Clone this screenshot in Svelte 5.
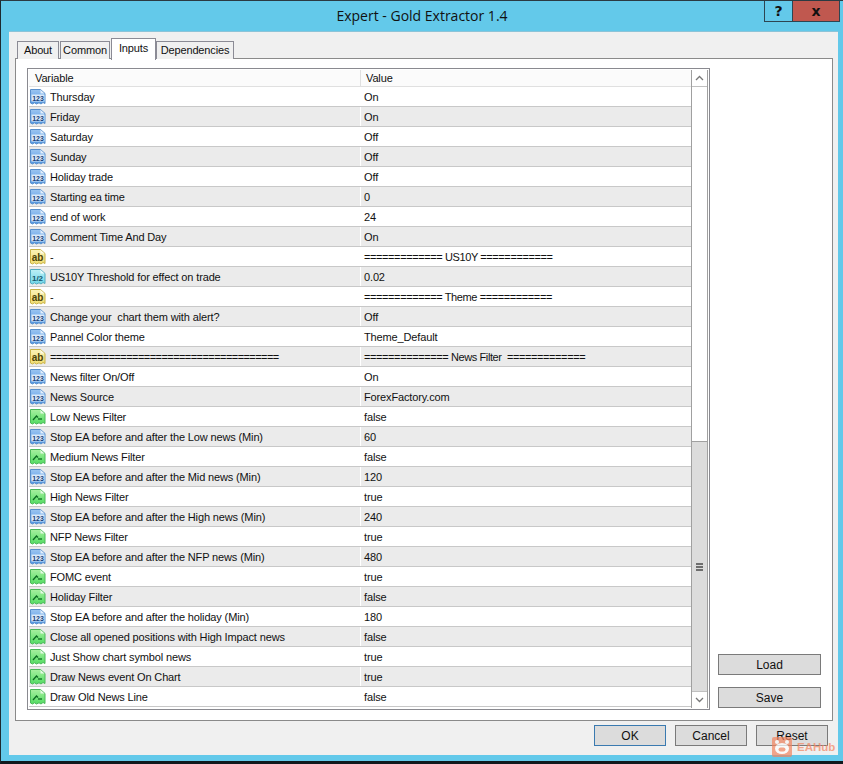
<script>
  const rows = [
    ["n", "Thursday", "On"],
    ["n", "Friday", "On"],
    ["n", "Saturday", "Off"],
    ["n", "Sunday", "Off"],
    ["n", "Holiday trade", "Off"],
    ["n", "Starting ea time", "0"],
    ["n", "end of work", "24"],
    ["n", "Comment Time And Day", "On"],
    ["s", "-", "============= US10Y ============"],
    ["d", "US10Y Threshold for effect on trade", "0.02"],
    ["s", "-", "============= Theme ============"],
    ["n", "Change your  chart them with alert?", "Off"],
    ["n", "Pannel Color theme", "Theme_Default"],
    ["s", "=======================================", "============== News Filter  ============="],
    ["n", "News filter On/Off", "On"],
    ["n", "News Source", "ForexFactory.com"],
    ["b", "Low News Filter", "false"],
    ["n", "Stop EA before and after the Low news (Min)", "60"],
    ["b", "Medium News Filter", "false"],
    ["n", "Stop EA before and after the Mid news (Min)", "120"],
    ["b", "High News Filter", "true"],
    ["n", "Stop EA before and after the High news (Min)", "240"],
    ["b", "NFP News Filter", "true"],
    ["n", "Stop EA before and after the NFP news (Min)", "480"],
    ["b", "FOMC event", "true"],
    ["b", "Holiday Filter", "false"],
    ["n", "Stop EA before and after the holiday (Min)", "180"],
    ["b", "Close all opened positions with High Impact news", "false"],
    ["b", "Just Show chart symbol news", "true"],
    ["b", "Draw News event On Chart", "true"],
    ["b", "Draw Old News Line", "false"]
  ];

  const tabs = ["About", "Common", "Inputs", "Dependencies"];

  const iconColors = {
    n: { top: "#9cc6f2", bottom: "#4f94e0", edge: "#5a90cc", label: "123" },
    s: { top: "#fbf3b8", bottom: "#efdc70", edge: "#c9b348", label: "ab" },
    d: { top: "#bdf0f6", bottom: "#6fd6e8", edge: "#52acc2", label: "1/2" },
    b: { top: "#a8f0a0", bottom: "#52dc62", edge: "#4cb85a", label: "" }
  };

  const isRule = (text) => text.includes("====");
</script>

{#snippet typeIcon(kind)}
  {@const c = iconColors[kind]}
  <svg class="icon" width="16" height="17" viewBox="0 0 16 17">
    <defs>
      <linearGradient id="grad-{kind}" x1="0" y1="0" x2="0" y2="1">
        <stop offset="0" stop-color={c.top} />
        <stop offset="1" stop-color={c.bottom} />
      </linearGradient>
    </defs>
    <path
      d="M.5 1.5H10.5L15 5.5V15.5L13 14.5L11 16L9 14.8L6.5 16L4.5 14.8L2.5 16L.5 15Z"
      fill="url(#grad-{kind})"
      stroke={c.edge}
    />
    <path d="M10.5 1.8V5.5H14.5Z" fill="#fff" fill-opacity=".75" />
    {#if kind === "b"}
      <path d="M3 12L6.5 8L8 9.5" fill="none" stroke="#0d6b22" stroke-width="1.3" />
      <path d="M8 11H12" fill="none" stroke="#0d6b22" stroke-width="1.3" />
    {:else if kind === "n"}
      <rect x="1.5" y="6.5" width="13" height="7" fill="#dcebfa" />
      <text x="8" y="12.6" class="num">{c.label}</text>
    {:else if kind === "s"}
      <text x="7.5" y="12.5" class="alpha">{c.label}</text>
    {:else}
      <text x="7.5" y="12.5" class="frac">{c.label}</text>
    {/if}
  </svg>
{/snippet}

<div class="window">
  <header class="titlebar">
    <span class="title">Expert - Gold Extractor 1.4</span>
    <div class="caption">
      <span class="help">?</span>
      <span class="close">x</span>
    </div>
  </header>

  <div class="client">
    <nav class="tabs">
      {#each tabs as tab}
        <span class="tab" class:active={tab === "Inputs"}>{tab}</span>
      {/each}
    </nav>

    <section class="panel">
      <div class="list">
        <div class="table">
          <div class="thead">
            <span class="th first">Variable</span>
            <span class="th">Value</span>
          </div>
          {#each rows as [kind, name, value], i}
            <div class="row" class:odd={i % 2 === 1}>
              <span class="cell first">
                {@render typeIcon(kind)}
                <span class="name" class:rule={isRule(name)}>{name}</span>
              </span>
              <span class="cell value" class:rule={isRule(value)}>{value}</span>
            </div>
          {/each}
        </div>
        <div class="scrollbar">
          <span class="arrow">
            <svg width="9" height="6" viewBox="0 0 9 6"><path d="M1 5L4.5 1.5L8 5" fill="none" stroke="#777" stroke-width="1.3" /></svg>
          </span>
          <div class="track">
            <div class="thumb"><i></i><i></i><i></i></div>
          </div>
          <span class="arrow">
            <svg width="9" height="6" viewBox="0 0 9 6"><path d="M1 1L4.5 4.5L8 1" fill="none" stroke="#777" stroke-width="1.3" /></svg>
          </span>
        </div>
      </div>
      <aside class="side">
        <button class="btn wide">Load</button>
        <button class="btn wide">Save</button>
      </aside>
    </section>

    <footer class="footer">
      <button class="btn main">OK</button>
      <button class="btn">Cancel</button>
      <button class="btn">Reset</button>
    </footer>
  </div>

  <div class="watermark">
    <svg width="20" height="20" viewBox="0 0 20 20">
      <rect width="20" height="20" rx="2" fill="#f4845f" />
      <ellipse cx="10" cy="11.5" rx="7" ry="5.5" fill="#fff" />
      <circle cx="5" cy="5" r="2" fill="#fff" />
      <circle cx="15" cy="5" r="2" fill="#fff" />
      <rect x="6.5" y="10.5" width="7" height="4" rx="2" fill="#f4845f" />
    </svg>
    <span>EAHub</span>
  </div>
</div>

<style>
  :global(body) {
    margin: 0;
    background: #63c9ea;
  }

  .window {
    position: relative;
    box-sizing: border-box;
    width: 843px;
    height: 764px;
    display: flex;
    flex-direction: column;
    background: #63c9ea;
    border-top: 1px solid #2b3a42;
    border-left: 1px solid #1d2a30;
    border-bottom: 3px solid #11181c;
    font-family: "Liberation Sans", Arial, sans-serif;
    font-size: 11px;
    letter-spacing: -0.14px;
    color: #111;
  }

  .titlebar {
    position: relative;
    height: 30px;
    flex: none;
    display: flex;
    justify-content: center;
    align-items: center;
  }

  .title {
    font-family: "Open Sans", sans-serif;
    font-size: 14px;
    letter-spacing: 0;
    padding-bottom: 1px;
  }

  .caption {
    position: absolute;
    top: 0;
    right: 3px;
    display: flex;
    height: 21px;
    box-sizing: border-box;
    border: 1px solid #2d4552;
    border-top: none;
    font-family: "DejaVu Sans", sans-serif;
    font-weight: bold;
    font-size: 14px;
  }

  .help {
    width: 27px;
    display: flex;
    align-items: center;
    justify-content: center;
    border-right: 1px solid #2d4552;
  }

  .close {
    width: 46px;
    display: flex;
    align-items: center;
    justify-content: center;
    background: #c0584f;
  }

  .client {
    flex: 1;
    min-height: 0;
    margin: 0 5px 6px 8px;
    display: flex;
    flex-direction: column;
    background: #f0f0f0;
    padding: 7px 5px 0 6px;
    border-top: 1px solid #8cc4d8;
  }

  .tabs {
    display: flex;
    align-items: flex-end;
    height: 20px;
    padding-left: 2px;
    position: relative;
    z-index: 1;
    margin-bottom: -1px;
  }

  .tab {
    box-sizing: border-box;
    height: 18px;
    padding: 0 0 2px;
    margin-right: 1px;
    display: flex;
    align-items: center;
    justify-content: center;
    border: 1px solid #8b8b95;
    border-bottom: none;
    background: #f0f0f0;
  }

  .tab:nth-child(1) {
    width: 42px;
  }

  .tab:nth-child(2) {
    width: 50px;
  }

  .tab:nth-child(4) {
    width: 78px;
  }

  .tab.active {
    width: 45px;
    height: 22px;
    margin: 0 0 -1px 0;
    padding: 0 0 4px;
    background: #fff;
  }

  .panel {
    flex: 1;
    min-height: 0;
    display: flex;
    background: #fff;
    border: 1px solid #8a8a8a;
    padding: 9px 11px 10px 11px;
  }

  .list {
    box-sizing: border-box;
    width: 683px;
    display: flex;
    border: 1px solid #8a8a90;
    padding: 1px;
  }

  .table {
    width: 662px;
    overflow: hidden;
  }

  .thead {
    display: grid;
    grid-template-columns: 331px 331px;
    height: 17px;
    background: #fbfbfb;
    border-bottom: 1px solid #e0e0e0;
    box-sizing: border-box;
  }

  .th {
    padding-left: 5px;
    line-height: 17px;
    border-left: 1px solid #e0e0e0;
  }

  .th.first {
    padding-left: 6px;
    border-left: none;
  }

  .row {
    display: grid;
    grid-template-columns: 331px 331px;
    box-sizing: border-box;
    height: 20px;
    border-bottom: 1px solid #c8c8c8;
    background: #fff;
  }

  .row.odd {
    background: #ebebeb;
  }

  .cell {
    display: flex;
    align-items: center;
    white-space: pre;
    overflow: hidden;
  }

  .cell.first {
    padding-left: 1px;
    gap: 4px;
  }

  .cell.value {
    padding-left: 3px;
    border-left: 1px solid #fff;
  }

  .name.rule {
    letter-spacing: -0.56px;
  }

  .value.rule {
    letter-spacing: -0.4px;
  }

  .icon {
    flex: none;
  }

  .num,
  .alpha,
  .frac {
    text-anchor: middle;
    font-family: "Liberation Sans", sans-serif;
    font-weight: bold;
    letter-spacing: 0;
  }

  .num {
    font-size: 7px;
    fill: #143f7a;
  }

  .alpha {
    font-size: 10px;
    fill: #4a4208;
  }

  .frac {
    font-size: 8px;
    fill: #14546b;
  }

  .scrollbar {
    box-sizing: border-box;
    width: 17px;
    display: flex;
    flex-direction: column;
    border-left: 1px solid #a0a0a0;
    border-right: 1px solid #a0a0a0;
  }

  .arrow {
    flex: none;
    height: 17px;
    display: flex;
    align-items: center;
    justify-content: center;
    background: #fff;
    border-bottom: 1px solid #c0c0c0;
    box-sizing: border-box;
  }

  .arrow:last-child {
    border-bottom: none;
    border-top: 1px solid #c0c0c0;
  }

  .track {
    flex: 1;
    display: flex;
    flex-direction: column;
    justify-content: flex-end;
    background: #fff;
  }

  .thumb {
    height: 250px;
    background: #dcdcdc;
    border-top: 1px solid #a0a0a0;
    box-sizing: border-box;
    display: flex;
    flex-direction: column;
    align-items: center;
    justify-content: center;
    gap: 1px;
  }

  .thumb i {
    display: block;
    width: 7px;
    height: 2px;
    background: #6e6e6e;
  }

  .side {
    flex: 1;
    display: flex;
    flex-direction: column;
    justify-content: flex-end;
    gap: 12px;
    margin-left: 8px;
    padding-bottom: 2px;
  }

  .btn {
    box-sizing: border-box;
    width: 72px;
    height: 21px;
    padding: 0;
    font: inherit;
    font-size: 12px;
    letter-spacing: 0;
    color: #111;
    background: #dcdcdc;
    border: 1px solid #7a7a7a;
    border-radius: 0;
  }

  .btn.wide {
    width: 103px;
  }

  .btn.main {
    border-color: #3a7ab0;
  }

  .footer {
    flex: none;
    display: flex;
    justify-content: flex-end;
    gap: 9px;
    padding: 4px 5px 9px 0;
  }

  .watermark {
    position: absolute;
    left: 771px;
    top: 736px;
    display: flex;
    align-items: center;
    gap: 5px;
    opacity: .7;
    color: #f4845f;
    font-family: "Liberation Sans", sans-serif;
    font-weight: bold;
    font-size: 11.5px;
    letter-spacing: 0;
  }
</style>
